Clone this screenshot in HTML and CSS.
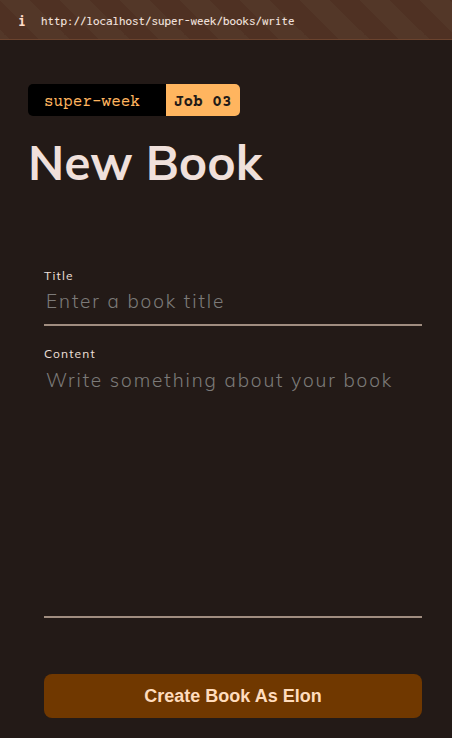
FILE: index.html
```html
<!DOCTYPE html>
<html lang="en">
<head>
<meta charset="utf-8">
<meta name="viewport" content="width=device-width, initial-scale=1">
<title>New Book</title>
<link rel="stylesheet" href="styles.css">
</head>
<body>
<header class="address-bar">
  <span class="address-icon">i</span>
  <span class="address-url">http://localhost/super-week/books/write</span>
</header>
<main class="page">
  <div class="badge">
    <span class="badge-project">super-week</span>
    <strong class="badge-job">Job 03</strong>
  </div>
  <h1 class="heading">New Book</h1>
  <form class="book-form">
    <div class="field">
      <label class="field-label" for="title">Title</label>
      <input class="field-control" id="title" type="text" placeholder="Enter a book title">
    </div>
    <div class="field">
      <label class="field-label" for="content">Content</label>
      <textarea class="field-control field-area" id="content" placeholder="Write something about your book"></textarea>
    </div>
    <button class="submit" type="submit">Create Book As Elon</button>
  </form>
</main>
</body>
</html>
```
FILE: styles.css
```css
* {
  box-sizing: border-box;
}

body {
  margin: 0;
  background: #231a17;
  color: #f0e0db;
  font-family: Mulish, Lato, sans-serif;
}

.address-bar {
  display: flex;
  align-items: center;
  gap: 15px;
  height: 40px;
  padding: 2px 18px 0;
  border-bottom: 1px solid #6b432e;
  background: linear-gradient(45deg, #533728 25%, #4f3123 25% 50%, #533728 50% 75%, #4f3123 75%) 0 0 / 60px 60px;
  font-family: Inconsolata, "DejaVu Sans Mono", monospace;
  font-size: 13px;
  font-weight: 500;
}

.address-icon {
  font-size: 16px;
  font-weight: bold;
  color: #ffdbc8;
}

.page {
  padding: 44px 28px 20px;
}

.badge {
  display: inline-flex;
  overflow: hidden;
  height: 32px;
  border-radius: 5px;
  font-family: "Courier Prime", "Liberation Mono", monospace;
  font-size: 16px;
  line-height: 36px;
}

.badge-project {
  padding: 0 26px 0 16px;
  background: #000;
  color: #ffb55f;
}

.badge-job {
  padding: 0 8px;
  background: #ffb55f;
  color: #231a17;
}

.heading {
  margin: 16px 0 76px;
  font-size: 48px;
  line-height: 60px;
  font-weight: 700;
}

.book-form {
  margin: 0 2px 0 16px;
}

.field {
  display: flex;
  flex-direction: column;
  margin-bottom: 20px;
}

.field-label {
  font-size: 12px;
  line-height: 16px;
  letter-spacing: 0.1em;
}

.field-control {
  width: 100%;
  height: 42px;
  padding: 0 2px 6px;
  border: 0;
  border-bottom: 2px solid #a08d80;
  border-radius: 0;
  outline: 0;
  background: transparent;
  color: inherit;
  font: inherit;
  font-size: 19px;
  font-weight: 300;
  letter-spacing: 0.1em;
}

.field-control::placeholder {
  color: #7c7a79;
}

.field-area {
  display: block;
  height: 256px;
  padding: 6px 2px;
  line-height: 24px;
  resize: none;
}

.submit {
  width: 100%;
  height: 44px;
  margin-top: 36px;
  border: 0;
  border-radius: 8px;
  background: #703800;
  color: #ffdcbd;
  font: bold 18px "Liberation Sans", Arial, sans-serif;
}
```
